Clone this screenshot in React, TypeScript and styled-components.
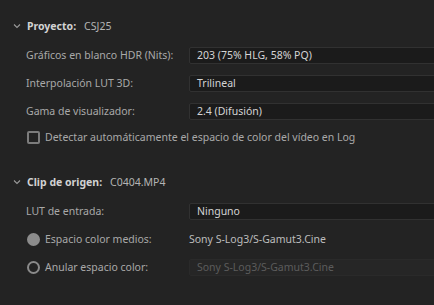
import React from "react"
import styled, { createGlobalStyle } from "styled-components"

const Global = createGlobalStyle`
html, body {
  margin: 0;
  padding: 0;
  background: #232323;
  overflow: hidden;
}
body {
  font-family: "Noto Sans", "Open Sans", sans-serif;
  font-size: 10.5px;
  color: #a9a9a9;
}
`;

const Panel = styled.div`
width: 434px;
height: 305px;
padding: 16px 0 0 13px;
box-sizing: border-box;
overflow: hidden;
`;

const Section = styled.section<{ $gap: number }>`
margin-top: ${p => p.$gap}px;
`;

const Header = styled.div`
height: 20px;
display: flex;
align-items: center;
margin-bottom: 5px;
`;

const Chevron = styled.svg`
width: 8px;
height: 6px;
margin-right: 6px;
flex: none;
`;

const HeaderTitle = styled.span`
font-weight: bold;
color: #d2d2d2;
margin-right: 8px;
`;

const HeaderValue = styled.span`
color: #b4b4b4;
`;

const Row = styled.div`
display: grid;
grid-template-columns: 163px 300px;
align-items: center;
height: 28px;
padding-left: 13px;
`;

const Label = styled.span`
display: flex;
align-items: center;
gap: 5px;
white-space: nowrap;
`;

const Select = styled.div<{ $disabled?: boolean }>`
height: 17px;
box-sizing: border-box;
display: flex;
align-items: center;
padding-left: 7px;
background: ${p => (p.$disabled ? "#262626" : "#1b1b1b")};
border: 1px solid ${p => (p.$disabled ? "#2a2a2a" : "#313131")};
border-radius: 2px;
color: ${p => (p.$disabled ? "#5c5c5c" : "#d4d4d4")};
white-space: nowrap;
`;

const Plain = styled.span`
color: #bdbdbd;
white-space: nowrap;
`;

const CheckRow = styled.div`
display: flex;
align-items: center;
gap: 5px;
height: 24px;
padding-left: 14px;
white-space: nowrap;
`;

const Checkbox = styled.span`
width: 13px;
height: 13px;
box-sizing: border-box;
border: 2px solid #7c7c7c;
border-radius: 2px;
flex: none;
`;

const Radio = styled.span<{ $checked?: boolean }>`
width: 13px;
height: 13px;
box-sizing: border-box;
border-radius: 50%;
flex: none;
margin-left: 1px;
background: ${p => (p.$checked ? "#8c8c8c" : "transparent")};
border: 2px solid ${p => (p.$checked ? "#8c8c8c" : "#8a8a8a")};
`;

const Caret = () => (
  <Chevron viewBox="0 0 8 6">
    <path d="M1 1.5 L4 4.5 L7 1.5" fill="none" stroke="#9a9a9a" strokeWidth="1.1" />
  </Chevron>
)

const App = () => {
  return (
    <>
      <Global />
      <Panel>
        <Section $gap={0}>
          <Header>
            <Caret />
            <HeaderTitle>Proyecto:</HeaderTitle>
            <HeaderValue>CSJ25</HeaderValue>
          </Header>
          <Row>
            <Label>Gráficos en blanco HDR (Nits):</Label>
            <Select>203 (75% HLG, 58% PQ)</Select>
          </Row>
          <Row>
            <Label>Interpolación LUT 3D:</Label>
            <Select>Trilineal</Select>
          </Row>
          <Row>
            <Label>Gama de visualizador:</Label>
            <Select>2.4 (Difusión)</Select>
          </Row>
          <CheckRow>
            <Checkbox />
            Detectar automáticamente el espacio de color del vídeo en Log
          </CheckRow>
        </Section>
        <Section $gap={23}>
          <Header>
            <Caret />
            <HeaderTitle>Clip de origen:</HeaderTitle>
            <HeaderValue>C0404.MP4</HeaderValue>
          </Header>
          <Row>
            <Label>LUT de entrada:</Label>
            <Select>Ninguno</Select>
          </Row>
          <Row>
            <Label><Radio $checked />Espacio color medios:</Label>
            <Plain>Sony S-Log3/S-Gamut3.Cine</Plain>
          </Row>
          <Row>
            <Label><Radio />Anular espacio color:</Label>
            <Select $disabled>Sony S-Log3/S-Gamut3.Cine</Select>
          </Row>
        </Section>
      </Panel>
    </>
  )
}

export default App;
